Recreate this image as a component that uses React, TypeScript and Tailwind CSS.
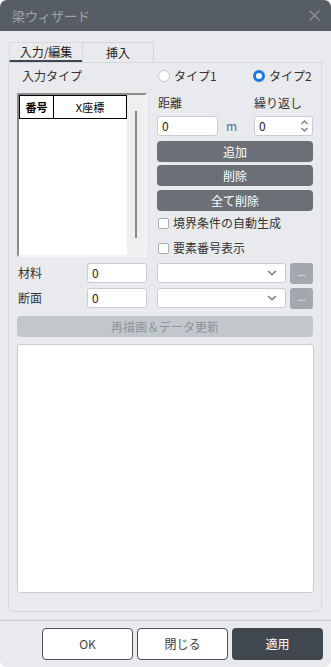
import React from "react";

const Chevron = () => (
  <svg width="10" height="6" viewBox="0 0 10 6" fill="none" stroke="#7b8087" strokeWidth="1.6">
    <path d="M1 1l4 3.6L9 1" />
  </svg>
);

const Radio = ({ checked, label }: { checked?: boolean; label: string }) => (
  <div className="flex items-center gap-[4px]">
    {checked ? (
      <span className="w-[12px] h-[12px] rounded-full border-[3.5px] border-[#1a73e8] bg-white" />
    ) : (
      <span className="w-[12px] h-[12px] rounded-full border border-[#c3c6ca] bg-white" />
    )}
    <span className="text-[12px] leading-[16px] text-[#333]">{label}</span>
  </div>
);

const Check = ({ label }: { label: string }) => (
  <div className="flex items-center gap-[4px] h-[16px]">
    <span className="w-[11px] h-[11px] rounded-[2px] border border-[#a9adb2] bg-white" />
    <span className="text-[12px] leading-[16px] text-[#333]">{label}</span>
  </div>
);

const DarkBtn = ({ label, className }: { label: string; className?: string }) => (
  <div
    className={
      "h-[21px] rounded-[4px] bg-[#6b7077] text-white text-[12px] flex items-center justify-center " +
      (className ?? "")
    }
  >
    {label}
  </div>
);

const NumInput = ({ className }: { className?: string }) => (
  <div
    className={
      "h-[20px] bg-white border border-[#c8cbcf] rounded-[3px] pl-[4px] flex items-center text-[12px] text-[#222] " +
      (className ?? "")
    }
  >
    0
  </div>
);

const FieldRow = ({ label, className }: { label: string; className?: string }) => (
  <div className={"flex items-center h-[20px] " + (className ?? "")}>
    <span className="w-[70px] text-[12px] text-[#333] pl-px">{label}</span>
    <NumInput className="w-[60px]" />
    <div className="ml-[10px] w-[129px] h-[20px] bg-white border border-[#c8cbcf] rounded-[3px] flex items-center justify-end pr-[8px]">
      <Chevron />
    </div>
    <div className="ml-[4px] w-[23px] h-[21px] rounded-[3px] bg-[#a3a8ae] text-white text-[9px] flex items-center justify-center leading-none pb-[2px]">
      ...
    </div>
  </div>
);

export default function App() {
  return (
    <div className="w-[331px] h-[667px] bg-[#e9eaee] rounded-[7px] overflow-hidden flex flex-col font-['Noto_Sans_CJK_JP','Noto_Sans',sans-serif]">
      {/* title */}
      <div className="h-[31px] shrink-0 bg-[#575d65] flex items-center justify-between pl-[12px] pr-[11px]">
        <span className="text-[13px] text-[#9ea3a9]">梁ウィザード</span>
        <svg width="11" height="11" viewBox="0 0 11 11" stroke="#8f959b" strokeWidth="1.1">
          <path d="M0.5 0.5l10 10M10.5 0.5l-10 10" />
        </svg>
      </div>

      <div className="pl-[8px] pr-[9px] pt-[11px]">
        {/* tabs */}
        <div className="flex h-[20px] pl-px">
          <div className="w-[73px] border-t border-l border-[#d8dadd] border-b-2 border-b-[#40464d] text-[12px] text-[#222] flex items-center justify-center">
            入力/編集
          </div>
          <div className="w-[72px] border border-b-0 border-[#d3d6da] text-[12px] text-[#222] flex items-center justify-center">
            挿入
          </div>
        </div>

        {/* panel */}
        <div className="border border-[#d5d8dc] rounded-b-[6px] pl-[8px] pr-[8px] pt-[5px] pb-[18px]">
          <div className="flex gap-[10px]">
            {/* left column */}
            <div className="w-[130px]">
              <div className="h-[16px] text-[12px] leading-[16px] text-[#333] pl-[5px]">入力タイプ</div>
              <div className="mt-[9px] h-[164px] bg-white border-2 border-t-[#8c8c8c] border-l-[#8c8c8c] border-r-[#f4f4f4] border-b-[#f4f4f4] flex">
                <div className="flex-1">
                  <div className="flex h-[24px] border border-black">
                    <div className="w-[34px] border-r border-black text-[11px] font-bold text-black flex items-center justify-center">
                      番号
                    </div>
                    <div className="flex-1 text-[11px] text-black flex items-center justify-center">X座標</div>
                  </div>
                </div>
                <div className="w-[18px] bg-[#efefef] flex justify-center pt-[16px]">
                  <div className="w-[2px] h-[127px] bg-[#8a8a8a]" />
                </div>
              </div>
            </div>

            {/* right column */}
            <div className="flex-1">
              <div className="h-[16px] flex items-center">
                <div className="w-[96px] pl-px">
                  <Radio label="タイプ1" />
                </div>
                <Radio checked label="タイプ2" />
              </div>
              <div className="mt-[11px] h-[16px] flex text-[12px] leading-[16px] text-[#333]">
                <span className="w-[97px] pl-px">距離</span>
                <span>繰り返し</span>
              </div>
              <div className="mt-[5px] flex items-center h-[20px]">
                <NumInput className="w-[61px]" />
                <span className="ml-[8px] w-[28px] text-[12px] text-[#4a6d9a]">m</span>
                <div className="w-[59px] h-[20px] bg-white border border-[#c8cbcf] rounded-[3px] pl-[4px] flex items-center justify-between text-[12px] text-[#222]">
                  0
                  <svg width="9" height="14" viewBox="0 0 9 14" fill="none" stroke="#7b8087" strokeWidth="1.3" className="mr-[3px]">
                    <path d="M1.5 5L4.5 2L7.5 5M1.5 9L4.5 12L7.5 9" />
                  </svg>
                </div>
              </div>
              <DarkBtn label="追加" className="mt-[5px]" />
              <DarkBtn label="削除" className="mt-[3px]" />
              <DarkBtn label="全て削除" className="mt-[4px]" />
              <div className="mt-[4px] pl-px">
                <Check label="境界条件の自動生成" />
              </div>
              <div className="mt-[9px] pl-px">
                <Check label="要素番号表示" />
              </div>
            </div>
          </div>

          <FieldRow label="材料" className="mt-[6px]" />
          <FieldRow label="断面" className="mt-[5px]" />

          <div className="mt-[8px] h-[21px] rounded-[4px] bg-[#c2c7cc] text-[12px] text-[#8e949a] flex items-center justify-center">
            再描画＆データ更新
          </div>

          <div className="mt-[7px] h-[249px] bg-white border border-[#c9ccd0] rounded-[3px] mr-[-1px]" />
        </div>
      </div>

      {/* footer */}
      <div className="mt-[8px] h-px bg-[#c8cbcf]" />
      <div className="mt-[7px] flex justify-end gap-[4px] pr-[8px]">
        <div className="w-[91px] h-[32px] bg-white border border-[#4b5058] rounded-[4px] text-[12px] text-[#3c4046] flex items-center justify-center">
          OK
        </div>
        <div className="w-[91px] h-[32px] bg-white border border-[#4b5058] rounded-[4px] text-[12px] text-[#3c4046] flex items-center justify-center">
          閉じる
        </div>
        <div className="w-[91px] h-[32px] bg-[#41474e] rounded-[4px] text-[12px] text-white flex items-center justify-center">
          適用
        </div>
      </div>
    </div>
  );
}
